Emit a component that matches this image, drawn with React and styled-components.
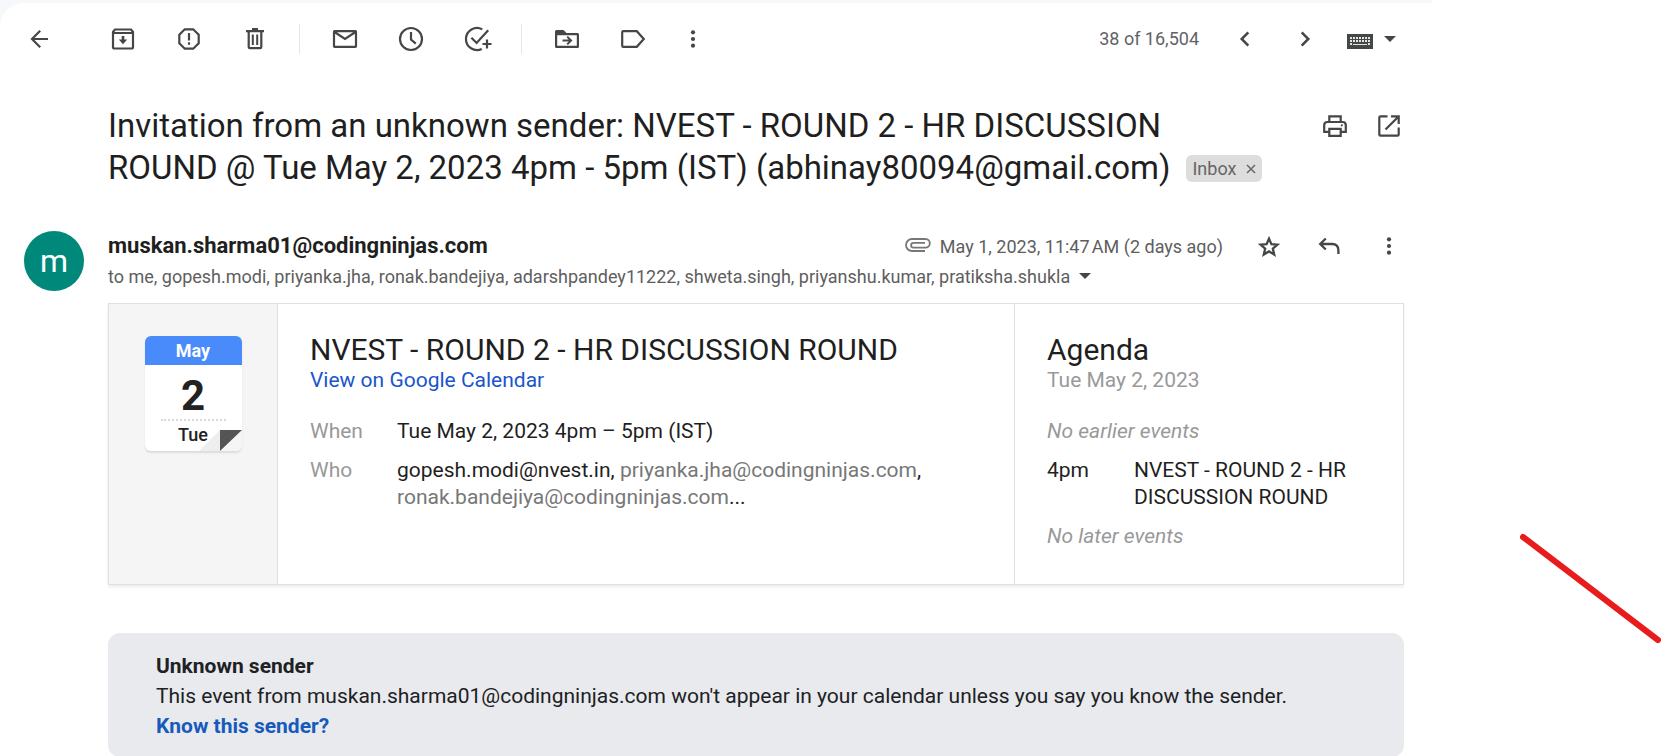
import React from "react";
import styled, { createGlobalStyle } from "styled-components";

const GlobalStyle = createGlobalStyle`
  * { box-sizing: border-box; }
  body { margin: 0; background: #fff; color: #1f1f1f; font-family: Roboto, "Liberation Sans", sans-serif; }
  h1, h2, h3, p, dl, dd, dt { margin: 0; font-weight: 400; }
  a { text-decoration: none; }
`;

const Page = styled.div`
  display: grid;
  grid-template-columns: minmax(0, 1fr) 229px;
  min-height: 100vh;
`;

const Frame = styled.div`
  background: #f6f8fc;
  padding-top: 3px;
`;

const Sheet = styled.main`
  background: #fff;
  border-top-left-radius: 24px;
`;

const Toolbar = styled.div`
  display: flex;
  align-items: center;
  height: 72px;
  padding: 0 36px 0 12px;
`;

const IconButton = styled.button`
  display: flex;
  align-items: center;
  justify-content: center;
  flex: none;
  width: ${(p) => p.$width || 66}px;
  height: 48px;
  padding: 0;
  border: 0;
  background: none;
  color: #444746;
  cursor: pointer;
`;

const ToolGroup = styled.div`
  display: flex;
  align-items: center;
  padding-right: ${(p) => p.$end || 0}px;
  border-right: ${(p) => (p.$end ? "1px solid #e4e5e7" : "0")};
  margin-left: ${(p) => p.$start || 0}px;
  height: 30px;
`;

const Pager = styled.div`
  display: flex;
  align-items: center;
  margin-left: auto;
`;

const Count = styled.span`
  color: #5f6368;
  font-size: 18px;
  line-height: 24px;
  margin-right: 16px;
`;

const Subject = styled.header`
  display: flex;
  align-items: flex-start;
  justify-content: space-between;
  padding: 30px 16px 0 108px;
`;

const TitleArea = styled.div`
  display: flex;
  align-items: flex-end;
  gap: 16px;
  min-width: 0;
`;

const Title = styled.h1`
  font-size: 33px;
  line-height: 42px;
`;

const Actions = styled.div`
  display: flex;
  flex: none;
  margin-top: -3px;
`;

const Chip = styled.span`
  display: flex;
  flex: none;
  align-items: center;
  gap: 10px;
  height: 27px;
  margin-bottom: 7px;
  padding: 0 6px;
  border-radius: 6px;
  background: #ddd;
  color: #666;
  font-size: 18px;
  line-height: 27px;
`;

const ChipClose = styled.button`
  display: flex;
  padding: 0;
  border: 0;
  background: none;
  color: #666;
`;

const Sender = styled.section`
  display: grid;
  grid-template-columns: 84px minmax(0, 1fr);
  align-items: start;
  padding: 42px 13px 0 24px;
`;

const Avatar = styled.div`
  display: flex;
  align-items: center;
  justify-content: center;
  width: 60px;
  height: 60px;
  border-radius: 50%;
  background: #00897b;
  color: #fff;
  font-size: 32px;
`;

const SenderTop = styled.div`
  display: flex;
  align-items: center;
  height: 30px;
`;

const Name = styled.h3`
  font-size: 22px;
  font-weight: 700;
  line-height: 30px;
  margin-right: auto;
`;

const When = styled.span`
  display: flex;
  align-items: center;
  gap: 8px;
  margin-right: 16px;
  color: #5e5e5e;
  font-size: 18px;
`;

const Recipients = styled.div`
  display: flex;
  align-items: center;
  height: 30px;
  color: #5e5e5e;
  font-size: 18px;
`;

const Content = styled.div`
  padding: 12px 28px 0 108px;
`;

const Card = styled.article`
  display: grid;
  grid-template-columns: 169px minmax(0, 1fr) 389px;
  min-height: 282px;
  border: 1px solid #e0e0e0;
  box-shadow: 0 2px 3px rgba(0, 0, 0, 0.08);
`;

const DateCell = styled.div`
  display: flex;
  justify-content: center;
  align-items: flex-start;
  padding-top: 32px;
  border-right: 1px solid #e0e0e0;
  background: #f5f5f5;
`;

const Leaf = styled.div`
  position: relative;
  width: 97px;
  height: 115px;
  border-radius: 6px;
  overflow: hidden;
  background: #fff;
  box-shadow: 0 2px 2px rgba(0, 0, 0, 0.1);
  color: #222;
  text-align: center;
`;

const LeafMonth = styled.div`
  background: #4a8bfc;
  color: #fff;
  font-size: 18px;
  font-weight: 700;
  line-height: 29px;
`;

const LeafDay = styled.div`
  margin: 0 16px;
  padding-top: 8px;
  border-bottom: 2px dotted #d8d8d8;
  font-size: 42px;
  font-weight: 700;
  line-height: 46px;
`;

const LeafWeekday = styled.div`
  position: relative;
  z-index: 1;
  font-size: 18px;
  font-weight: 500;
  line-height: 28px;
`;

const Fold = styled.svg`
  position: absolute;
  right: 0;
  bottom: 0;
`;

const Pane = styled.div`
  padding: 29px 32px 27px;
  border-left: ${(p) => (p.$divided ? "1px solid #e0e0e0" : "0")};
`;

const PaneTitle = styled.h2`
  font-size: 30px;
  line-height: 34px;
`;

const PaneSub = styled.p`
  color: #999;
  font-size: 21px;
  line-height: 27px;
  margin-bottom: 24px;
`;

const PaneLink = styled.a`
  color: #1a55cb;
`;

const Rows = styled.dl`
  display: grid;
  grid-template-columns: 87px minmax(0, 1fr);
  row-gap: 12px;
  font-size: 21px;
  line-height: 27px;
`;

const Label = styled.dt`
  color: ${(p) => (p.$dark ? "#222" : "#999")};
`;

const Muted = styled.span`
  color: #777;
`;

const Note = styled.p`
  color: #999;
  font-size: 21px;
  font-style: italic;
  line-height: 27px;
  margin: ${(p) => (p.$after ? "12px 0 0" : "0 0 12px")};
`;

const Banner = styled.aside`
  margin-top: 48px;
  padding: 18px 48px 16px;
  border-radius: 12px;
  background: #e8eaed;
  color: #202124;
  font-size: 21px;
  line-height: 30px;
`;

const BannerLink = styled.a`
  color: #185abc;
  font-weight: 700;
`;

const Margin = styled.div`
  padding: 532px 0 0 88px;
`;

function Icon({ children, size = 30, title }) {
  return (
    <svg width={size} height={size} viewBox="0 0 30 30" fill="none" stroke="currentColor" strokeWidth="2.2" aria-hidden={!title}>
      {children}
    </svg>
  );
}

const dots = (
  <g fill="currentColor" stroke="none">
    <circle cx="15" cy="8.3" r="2.1" />
    <circle cx="15" cy="15" r="2.1" />
    <circle cx="15" cy="21.7" r="2.1" />
  </g>
);

const glyphs = {
  back: <path d="M24 15H8M16.2 6.8 8 15l8.2 8.2" />,
  archive: (
    <>
      <path d="M7 5.5h16l2 2.5v15q0 1.5-1.5 1.5h-17Q5 24.5 5 23V8zM5 9h20" />
      <path d="M15 12v4" strokeWidth="2.6" />
      <path d="M10.8 15.5h8.4L15 20.2z" fill="currentColor" stroke="none" />
    </>
  ),
  spam: (
    <>
      <path d="M10.8 5.3h8.4l5.5 5.5v8.4l-5.5 5.5h-8.4l-5.5-5.5v-8.4z" />
      <path d="M15 9v7.5M15 18.3v2.5" />
    </>
  ),
  trash: (
    <>
      <path d="M6 7.2h18M12 5h6M8.7 8v15q0 1.2 1.2 1.2h10.2q1.2 0 1.2-1.2V8" />
      <path d="M12.8 10.5v10.5M17.2 10.5v10.5" strokeWidth="2" />
    </>
  ),
  mail: <path d="M4.5 7.2h21q.5 0 .5.5v14.6q0 .6-.6.6H4.600q-.6 0-.6-.6V7.7q0-.5.5-.5zM4.500 8 15 15l10.500-7" />,
  clock: (
    <>
      <circle cx="15" cy="15" r="11" />
      <path d="M15 8v7.6l4.800 4" />
    </>
  ),
  task: (
    <>
      <path d="M20.3 5.4A11 11 0 1 0 19.8 24.9" />
      <path d="m9.400 13.800 5.200 5.200L26.200 6.200M25 15.500v9M20.500 20H29.500" />
    </>
  ),
  move: (
    <>
      <path d="M3 7.500Q3 6 4.500 6h7l3 3H25.500Q27 9 27 10.500v12Q27 24 25.500 24h-21Q3 24 3 22.500zM5.200 11.200v10.600h19.600V11.200z" fill="currentColor" fillRule="evenodd" stroke="none" />
      <path d="M10.500 16.500h8M15.200 12.600l3.900 3.900-3.900 3.900" strokeWidth="2" />
    </>
  ),
  label: <path d="M5.300 7.200h13.500l7 7.800-7 7.800H5.300Q4.200 22.800 4.200 21.700V8.300Q4.200 7.200 5.300 7.200z" />,
  more: dots,
  prev: <path d="m18.300 8.300-6.600 6.700 6.600 6.700" strokeWidth="2.500" />,
  next: <path d="m11.700 8.300 6.600 6.700-6.600 6.700" strokeWidth="2.500" />,
  print: (
    <>
      <path d="M9.300 10V5.300h11.400V10M9 20.800H4.200v-6.600q0-3.200 3.200-3.200h15.200q3.200 0 3.200 3.200v6.600H21" />
      <path d="M9.300 17.800h11.400v7H9.300z" />
      <circle cx="21.800" cy="14.300" r="1.100" fill="currentColor" stroke="none" />
    </>
  ),
  open: <path d="M13.500 5.300h-7q-1.200 0-1.200 1.200v17q0 1.200 1.200 1.200h17q1.200 0 1.200-1.200v-7M17 5.300h7.700V13M24.300 5.700 11.500 18.500" />,
  star: <path d="m15 7.700 2.400 5.500 6 .5-4.600 3.900 1.400 5.900L15 20.400l-5.200 3.100 1.400-5.900-4.600-3.900 6-.5z" strokeWidth="2.300" />,
  reply: <path d="m11.800 7.500-5.600 5.500 5.600 5.500M6.500 13H18q6.400 0 6.400 6.400V23" strokeWidth="2.300" />,
};

function Tool({ name, label, width }) {
  return (
    <IconButton type="button" aria-label={label} $width={width}>
      <Icon>{glyphs[name]}</Icon>
    </IconButton>
  );
}

function Caret() {
  return (
    <svg width="12" height="6" viewBox="0 0 12 6" aria-hidden="true">
      <path d="M0 0h12L6 6z" fill="#444746" />
    </svg>
  );
}

const KeyRow = ({ y }) => [4, 7, 10, 13, 16, 19, 22].map((x) => <rect key={x} x={x - 1} y={y} width="2" height="2" />);

const KeyboardButton = styled(IconButton)`
  gap: 11px;
  margin-left: 12px;

  svg:first-child {
    margin-top: 4px;
  }
`;

const CaretButton = styled(IconButton)`
  margin-left: 3px;
`;

export default function App() {
  return (
    <>
      <GlobalStyle />
      <Page>
        <Frame>
          <Sheet>
            <Toolbar>
              <Tool name="back" label="Back to inbox" width={54} />
              <ToolGroup $start={24} $end={11}>
                <Tool name="archive" label="Archive" />
                <Tool name="spam" label="Report spam" />
                <Tool name="trash" label="Delete" />
              </ToolGroup>
              <ToolGroup $start={12} $end={11}>
                <Tool name="mail" label="Mark as unread" />
                <Tool name="clock" label="Snooze" />
                <Tool name="task" label="Add to tasks" />
              </ToolGroup>
              <ToolGroup $start={12}>
                <Tool name="move" label="Move to" />
                <Tool name="label" label="Labels" />
                <Tool name="more" label="More" width={54} />
              </ToolGroup>
              <Pager>
                <Count>38 of 16,504</Count>
                <Tool name="prev" label="Newer" width={60} />
                <Tool name="next" label="Older" width={60} />
                <KeyboardButton type="button" aria-label="Input tools" $width={49}>
                  <svg width="26" height="15" viewBox="0 0 26 15" aria-hidden="true">
                    <path d="M0 0h26v15H0z" fill="#444746" />
                    <g fill="#fff" opacity=".85">
                      <KeyRow y={3} />
                      <KeyRow y={6} />
                      <rect x="3" y="9" width="2" height="2" />
                      <rect x="6" y="10" width="14" height="1" />
                      <rect x="21" y="9" width="2" height="2" />
                    </g>
                  </svg>
                  <Caret />
                </KeyboardButton>
              </Pager>
            </Toolbar>

            <Subject>
              <TitleArea>
                <Title>
                  Invitation from an unknown sender: NVEST - ROUND 2 - HR DISCUSSION
                  <br />
                  ROUND @ Tue May 2, 2023 4pm - 5pm (IST) (abhinay80094@gmail.com)
                </Title>
                <Chip>
                  Inbox
                  <ChipClose type="button" aria-label="Remove label Inbox">
                    <svg width="10" height="10" viewBox="0 0 10 10" stroke="currentColor" strokeWidth="1.5">
                      <path d="m1 1 8 8M9 1 1 9" />
                    </svg>
                  </ChipClose>
                </Chip>
              </TitleArea>
              <Actions>
                <Tool name="print" label="Print all" width={54} />
                <Tool name="open" label="Open in new window" width={54} />
              </Actions>
            </Subject>

            <Sender>
              <Avatar>m</Avatar>
              <div>
                <SenderTop>
                  <Name>muskan.sharma01@codingninjas.com</Name>
                  <When>
                    <svg width="30" height="18" viewBox="0 0 30 18" fill="none" stroke="#777" strokeWidth="1.8" aria-hidden="true">
                      <path d="M23 14H10a6 6 0 0 1 0-12h13.500a4.300 4.300 0 0 1 0 8.600H11.500a2.400 2.400 0 0 1 0-4.800H23" />
                    </svg>
                    {"May 1, 2023, 11:47\u202fAM (2 days ago)"}
                  </When>
                  <Tool name="star" label="Star" width={60} />
                  <Tool name="reply" label="Reply" width={60} />
                  <Tool name="more" label="More options" width={60} />
                </SenderTop>
                <Recipients>
                  to me, gopesh.modi, priyanka.jha, ronak.bandejiya, adarshpandey11222, shweta.singh, priyanshu.kumar,
                  pratiksha.shukla
                  <CaretButton type="button" aria-label="Show details" $width={24}>
                    <Caret />
                  </CaretButton>
                </Recipients>
              </div>
            </Sender>

            <Content>
              <Card>
                <DateCell>
                  <Leaf>
                    <LeafMonth>May</LeafMonth>
                    <LeafDay>2</LeafDay>
                    <LeafWeekday>Tue</LeafWeekday>
                    <Fold width="43" height="21" viewBox="0 0 43 21" aria-hidden="true">
                      <path d="M0 21 21 0v21z" fill="#eee" />
                      <path d="M22 21h21V0z" fill="#f5f5f5" />
                      <path d="M21 0h22L21 21z" fill="#555" />
                    </Fold>
                  </Leaf>
                </DateCell>
                <Pane>
                  <PaneTitle>NVEST - ROUND 2 - HR DISCUSSION ROUND</PaneTitle>
                  <PaneSub>
                    <PaneLink href="#calendar">View on Google Calendar</PaneLink>
                  </PaneSub>
                  <Rows>
                    <Label>When</Label>
                    <dd>Tue May 2, 2023 4pm – 5pm (IST)</dd>
                    <Label>Who</Label>
                    <dd>
                      gopesh.modi@nvest.in, <Muted>priyanka.jha@codingninjas.com</Muted>,{" "}
                      <Muted>ronak.bandejiya@codingninjas.com</Muted>...
                    </dd>
                  </Rows>
                </Pane>
                <Pane $divided>
                  <PaneTitle>Agenda</PaneTitle>
                  <PaneSub>Tue May 2, 2023</PaneSub>
                  <Note>No earlier events</Note>
                  <Rows>
                    <Label $dark>4pm</Label>
                    <dd>NVEST - ROUND 2 - HR DISCUSSION ROUND</dd>
                  </Rows>
                  <Note $after>No later events</Note>
                </Pane>
              </Card>

              <Banner>
                <strong>Unknown sender</strong>
                <p>This event from muskan.sharma01@codingninjas.com won't appear in your calendar unless you say you know the sender.</p>
                <BannerLink href="#know-sender">Know this sender?</BannerLink>
              </Banner>
            </Content>
          </Sheet>
        </Frame>
        <Margin>
          <svg width="141" height="112" viewBox="0 0 141 112" aria-hidden="true">
            <path d="M3 5 138 108" stroke="#e81c1c" strokeWidth="6" strokeLinecap="round" />
          </svg>
        </Margin>
      </Page>
    </>
  );
}
